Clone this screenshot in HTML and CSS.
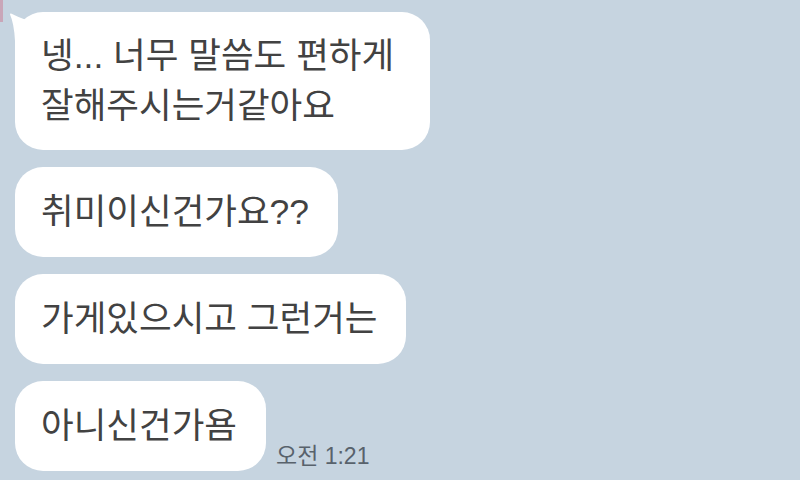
FILE: index.html
```html
<!DOCTYPE HTML>
<html lang="ko">
    <head>
        <meta charset="utf-8" />
        <meta name="viewport" content="width=device-width, initial-scale=1.0" />
        <link rel="stylesheet" href="styles.css">
    </head>
    <body>
      <div class="borda"></div>
      <ul class="conversa">
        <li class="linha">
          <div class="balao primeiro">
            <svg class="cauda" width="30" height="32" viewBox="0 0 30 32">
              <path d="M7 2.5 Q14 6 21 8.5 L26 26 L11 30 Q10 12 6 3.5 Q6 2 7 2.5 Z" fill="#ffffff"/>
            </svg>
            <span class="texto">넹... 너무 말씀도 편하게<br>잘해주시는거같아요</span>
          </div>
        </li>
        <li class="linha">
          <div class="balao"><span class="texto">취미이신건가요??</span></div>
        </li>
        <li class="linha">
          <div class="balao"><span class="texto">가게있으시고 그런거는</span></div>
        </li>
        <li class="linha">
          <div class="balao"><span class="texto">아니신건가욤</span></div>
          <span class="hora">오전 1:21</span>
        </li>
      </ul>
    </body>
</html>
```

FILE: styles.css
```css
body {
  margin: 0;
  width: 800px;
  height: 480px;
  overflow: hidden;
  background-color: #c6d4e0;
  font-family: "Liberation Sans", "Noto Sans CJK KR", sans-serif;
}

div.borda {
  position: absolute;
  left: 0;
  top: 0;
  width: 3px;
  height: 22px;
  background-color: #c9a6b8;
}

ul.conversa {
  list-style-type: none;
  margin: 0;
  padding: 12px 0 0 15px;
  display: flex;
  flex-direction: column;
  gap: 17px;
}

li.linha {
  display: flex;
  align-items: flex-end;
  gap: 10px;
}

div.balao {
  position: relative;
  box-sizing: border-box;
  background-color: #ffffff;
  border-radius: 28px;
  padding: 21px 29px 21px 26px;
  font-size: 35.5px;
  line-height: 48px;
  color: #424242;
  white-space: nowrap;
}

div.primeiro {
  line-height: 50px;
  padding-top: 19px;
  padding-bottom: 19px;
  padding-right: 36px;
}

span.texto {
  position: relative;
}

svg.cauda {
  position: absolute;
  left: -11px;
  top: -1px;
}

span.hora {
  font-size: 23px;
  line-height: 23px;
  color: #58626c;
  padding-bottom: 3px;
}
```
